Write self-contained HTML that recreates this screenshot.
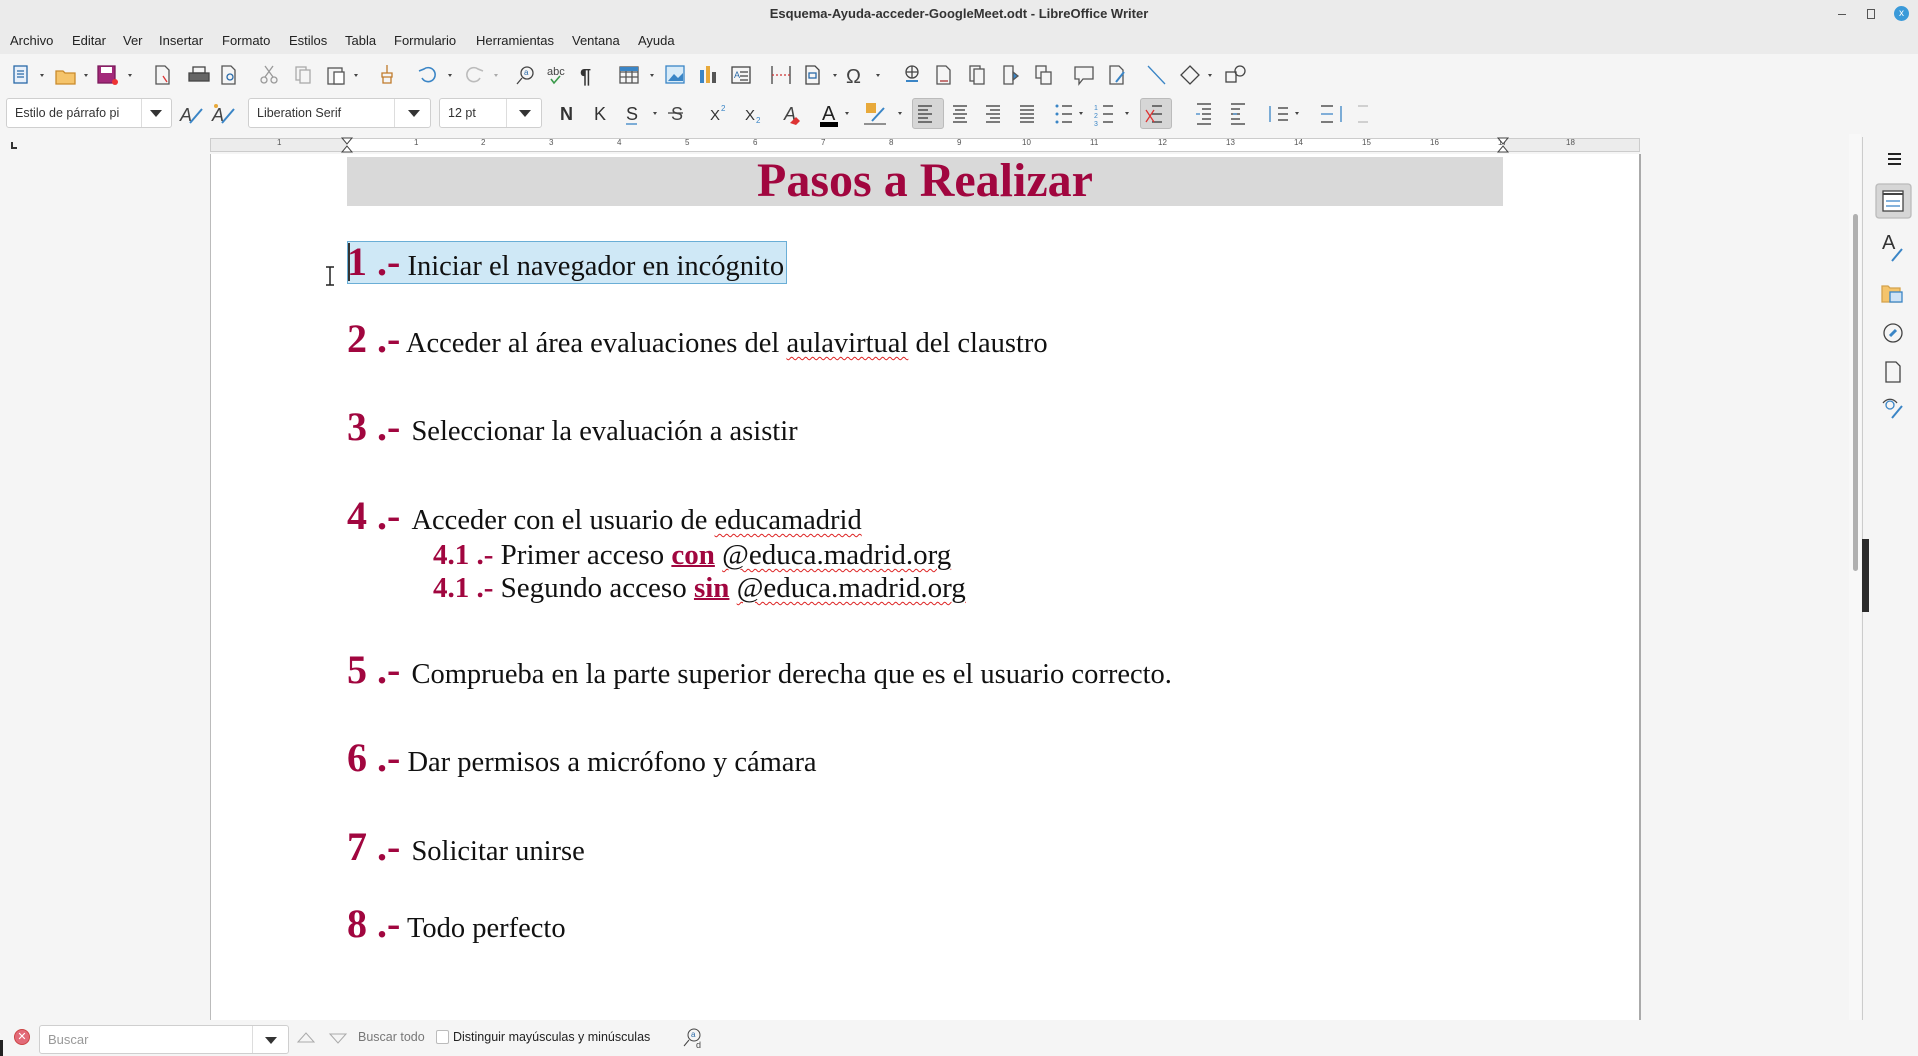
<!DOCTYPE html>
<html><head><meta charset="utf-8">
<style>
*{margin:0;padding:0;box-sizing:border-box}
body{width:1918px;height:1056px;overflow:hidden;background:#f5f5f5;font-family:"Liberation Sans",sans-serif;position:relative;color:#222}
.a{position:absolute}
.title{top:0;left:0;width:1918px;height:29px;background:#ebebeb;text-align:center;font-size:13px;font-weight:bold;line-height:28px;color:#333}
.menu{top:29px;left:0;width:1918px;height:25px;background:#ebebeb;font-size:13px;line-height:24px}
.menu span{position:absolute;top:0}
.tb{left:0;width:1918px;background:#f5f5f5}
.ic{position:absolute}
.box{position:absolute;background:#fff;border:1px solid #cfcfcf;border-radius:3px;font-size:12.5px;line-height:28px;padding-left:8px;color:#333}
.dd{position:absolute;width:0;height:0;border-left:6px solid transparent;border-right:6px solid transparent;border-top:7px solid #333}
.doc{font-family:"Liberation Serif",serif;color:#111;white-space:nowrap}
.it{position:absolute;font-size:40px;line-height:40px}
.it b{color:#a1063f;font-size:40px}
.it span{font-size:28.5px}
.it span span{font-size:inherit}
.it .p{padding-left:4px}
.sub{position:absolute;font-size:29px;line-height:29px}
.sub b{color:#a1063f}
.w{text-decoration:underline wavy #d22;text-decoration-thickness:1px;text-underline-offset:4px}
.u{color:#a1063f;font-weight:bold;text-decoration:underline;text-decoration-thickness:2px}
</style></head><body>
<div class="a title">Esquema-Ayuda-acceder-GoogleMeet.odt - LibreOffice Writer</div>
<div class="a" style="left:1838px;width:8px;height:1px;background:#555;top:14px"></div>
<div class="a" style="top:9px;left:1867px;width:8px;height:10px;border:1px solid #555"></div>
<div class="a" style="top:6px;left:1894px;width:15px;height:15px;border-radius:50%;background:#3b9ad9;color:#fff;font-size:10px;line-height:15px;text-align:center">x</div>
<div class="a menu">
<span style="left:10px">Archivo</span><span style="left:72px">Editar</span><span style="left:123px">Ver</span><span style="left:159px">Insertar</span><span style="left:222px">Formato</span><span style="left:289px">Estilos</span><span style="left:345px">Tabla</span><span style="left:394px">Formulario</span><span style="left:476px">Herramientas</span><span style="left:572px">Ventana</span><span style="left:638px">Ayuda</span>
</div>
<div class="a tb" style="top:54px;height:83px"></div>

<svg class="ic" style="left:0;top:62px" width="1300" height="28" viewBox="0 0 1300 28" fill="none" stroke-width="1.3">
<g stroke="#2a6aa8"><rect x="14" y="4" width="13" height="17" fill="#e8f0fa"/><path d="M17 9h7M17 12h7M17 15h7"/></g>
<path d="M40 12l2 3 2-3z" fill="#444"/>
<path d="M56 9h7l2 2h10v11H56z" fill="#f5c46b" stroke="#c98a2b"/>
<path d="M84 12l2 3 2-3z" fill="#444"/>
<rect x="98" y="4" width="17" height="17" fill="#a3297a" stroke="#7a1a5a"/><rect x="101" y="5" width="11" height="6" fill="#fff"/><circle cx="115" cy="20" r="3" fill="#e33"/>
<path d="M128 12l2 3 2-3z" fill="#444"/>
<g stroke="#555"><path d="M156 4h9l4 4v14h-13z"/></g><path d="M163 14l4 6" stroke="#d33"/>
<g stroke="#444"><rect x="189" y="11" width="20" height="8" fill="#666"/><rect x="193" y="5" width="12" height="6"/></g>
<g stroke="#555"><path d="M222 4h9l4 4v14h-13z"/><circle cx="230" cy="15" r="3" stroke="#2a6aa8"/></g>
<g stroke="#999"><circle cx="264" cy="18" r="3"/><circle cx="274" cy="18" r="3"/><path d="M265 15l8-11M273 15l-8-11"/></g>
<g stroke="#aaa"><rect x="296" y="5" width="10" height="13"/><rect x="300" y="8" width="10" height="13" fill="#f5f5f5"/></g>
<g stroke="#555"><rect x="328" y="6" width="14" height="16"/><rect x="334" y="10" width="10" height="12" fill="#fff"/></g>
<path d="M354 12l2 3 2-3z" fill="#444"/>
<g stroke="#c07a2a"><path d="M387 3v8M382 11h10v4h-10zM383 15v6h8v-6"/></g>
<path d="M422 16a7 7 0 1 0 2-9l-5 2" stroke="#3a85c6" stroke-width="1.6"/><path d="M448 12l2 3 2-3z" fill="#444"/>
<path d="M480 16a7 7 0 1 1-2-9l5 2" stroke="#bbb" stroke-width="1.6"/><path d="M494 12l2 3 2-3z" fill="#aaa"/>
<g stroke="#444"><circle cx="527" cy="11" r="6"/><path d="M522 16l-5 6"/></g><text x="524" y="13" font-size="8" fill="#2a6aa8" stroke="none">a</text>
<text x="547" y="13" font-size="11" fill="#444" stroke="none">abc</text><path d="M551 17l3 4 6-7" stroke="#3a9a4a" stroke-width="1.6"/>
<text x="580" y="21" font-size="20" font-weight="bold" fill="#333" stroke="none">¶</text>
<g stroke="#555"><rect x="620" y="5" width="18" height="16"/><path d="M620 10h18M620 15h18M626 5v16M632 5v16"/></g><rect x="620" y="5" width="18" height="4" fill="#3a85c6"/>
<path d="M650 12l2 3 2-3z" fill="#444"/>
<rect x="666" y="4" width="18" height="17" stroke="#3a85c6" fill="#d8ebf8"/><path d="M668 19l6-7 4 4 5-5v8z" fill="#3a85c6"/>
<rect x="700" y="8" width="4" height="13" fill="#3a85c6"/><rect x="706" y="4" width="4" height="17" fill="#e8a93a"/><rect x="712" y="10" width="4" height="11" fill="#555"/>
<g stroke="#444"><rect x="732" y="5" width="18" height="16"/><path d="M740 10h8M740 14h8M740 18h8"/></g><text x="734" y="16" font-size="9" fill="#2a6aa8" stroke="none">A</text>
<g stroke="#444"><path d="M772 4v18M790 4v18"/><path d="M772 13h18" stroke="#c33" stroke-dasharray="2 2"/></g>
<g stroke="#444"><path d="M806 4h9l4 4v14h-13z"/><rect x="809" y="11" width="7" height="5" stroke="#2a6aa8"/></g><path d="M833 12l2 3 2-3z" fill="#444"/>
<text x="846" y="21" font-size="20" fill="#444" stroke="none">Ω</text><path d="M876 12l2 3 2-3z" fill="#444"/>
<g stroke="#444"><circle cx="912" cy="10" r="6"/><path d="M906 10h12M912 4v12"/></g><path d="M906 19h12" stroke="#3a85c6" stroke-width="2"/>
<g stroke="#555"><path d="M937 4h9l4 4v14h-13z"/><path d="M940 19h8" stroke="#a33"/></g>
<g stroke="#555"><rect x="970" y="4" width="10" height="15"/><rect x="974" y="7" width="10" height="15" fill="#f5f5f5"/></g>
<g stroke="#555"><path d="M1004 4h9v18h-9z"/><path d="M1013 10l5 4-5 4z" fill="#3a85c6"/></g>
<g stroke="#555"><rect x="1036" y="4" width="10" height="12"/><rect x="1041" y="10" width="10" height="12" fill="#f5f5f5"/></g>
<path d="M1075 5h18v12h-10l-4 5v-5h-4z" stroke="#555"/>
<g stroke="#555"><path d="M1110 4h9l4 4v14h-13z"/><path d="M1116 20l8-10" stroke="#3a85c6" stroke-width="2"/></g>
<path d="M1148 4l17 18" stroke="#3a85c6"/>
<path d="M1190 4l9 9-9 9-9-9z" stroke="#444"/><path d="M1208 12l2 3 2-3z" fill="#444"/>
<g stroke="#444"><rect x="1226" y="10" width="10" height="10"/><circle cx="1240" cy="9" r="5"/></g>
</svg>

<div class="box" style="left:6px;top:98px;width:166px;height:30px">Estilo de párrafo pi</div>
<div class="a" style="left:141px;top:99px;width:1px;height:28px;background:#ddd"></div>
<div class="dd" style="left:150px;top:110px"></div>
<svg class="ic" style="left:178px;top:101px" width="60" height="26" fill="none" stroke-width="1.3"><text x="2" y="20" font-size="18" font-style="italic" fill="#444">A</text><path d="M12 22l12-14" stroke="#3a85c6" stroke-width="2"/><text x="34" y="20" font-size="18" font-style="italic" fill="#444">A</text><path d="M44 22l12-14" stroke="#3a85c6" stroke-width="2"/><circle cx="38" cy="5" r="2" fill="#e8a93a"/></svg>
<div class="box" style="left:248px;top:98px;width:183px;height:30px">Liberation Serif</div>
<div class="a" style="left:394px;top:99px;width:1px;height:28px;background:#ddd"></div>
<div class="dd" style="left:408px;top:110px"></div>
<div class="box" style="left:439px;top:98px;width:103px;height:30px">12 pt</div>
<div class="a" style="left:506px;top:99px;width:1px;height:28px;background:#ddd"></div>
<div class="dd" style="left:519px;top:110px"></div>
<div class="a" style="left:912px;top:98px;width:32px;height:31px;background:#d6d6d6;border:1px solid #bbb;border-radius:3px"></div>
<div class="a" style="left:1140px;top:98px;width:32px;height:31px;background:#d6d6d6;border:1px solid #bbb;border-radius:3px"></div>
<svg class="ic" style="left:550px;top:98px" width="820" height="32" fill="none" stroke-width="1.3">
<text x="10" y="22" font-size="18" font-weight="bold" fill="#333" stroke="none">N</text>
<text x="44" y="22" font-size="18" fill="#333" stroke="none">K</text>
<text x="76" y="22" font-size="18" fill="#333" stroke="none">S</text><path d="M76 26h11" stroke="#3a85c6"/><path d="M103 14l2 3 2-3z" fill="#444"/>
<text x="121" y="22" font-size="18" fill="#444" stroke="none">S</text><path d="M118 15h15" stroke="#444"/>
<text x="160" y="22" font-size="15" fill="#333" stroke="none">X</text><text x="171" y="13" font-size="8" fill="#3a85c6" stroke="none">2</text>
<text x="195" y="22" font-size="15" fill="#333" stroke="none">X</text><text x="206" y="25" font-size="8" fill="#3a85c6" stroke="none">2</text>
<text x="234" y="22" font-size="18" font-style="italic" fill="#444" stroke="none">A</text><path d="M240 25l6-6 4 4-4 4z" fill="#d33"/>
<text x="272" y="22" font-size="20" fill="#222" stroke="none">A</text><rect x="270" y="24" width="18" height="5" fill="#000"/><path d="M295 14l2 3 2-3z" fill="#444"/>
<rect x="316" y="5" width="10" height="10" fill="#e8a93a"/><path d="M314 26h22" stroke="#555"/><path d="M322 23l12-13" stroke="#3a85c6" stroke-width="2"/><path d="M348 14l2 3 2-3z" fill="#444"/>
<g stroke="#333"><path d="M368 8h14M368 12h10M368 16h14M368 20h10M368 24h14"/>
<path d="M403 8h14M405 12h10M403 16h14M405 20h10M403 24h14"/>
<path d="M436 8h14M440 12h10M436 16h14M440 20h10M436 24h14"/>
<path d="M470 8h14M470 12h14M470 16h14M470 20h14M470 24h14"/>
<path d="M512 8h10M512 16h10M512 24h10"/><path d="M553 8h10M553 16h10M553 24h10"/>
<path d="M602 8h10M602 16h10M602 24h10"/>
<path d="M647 6h14M652 11h9M652 16h9M652 21h9M647 26h14"/><path d="M681 6h14M681 11h9M681 16h9M681 21h9M681 26h14"/>
<path d="M728 10h10M728 16h10M728 22h10"/><path d="M771 8h12M771 24h12"/>
</g>
<g fill="#3a85c6" stroke="none"><circle cx="507" cy="8" r="1.5"/><circle cx="507" cy="16" r="1.5"/><circle cx="507" cy="24" r="1.5"/></g>
<path d="M529 14l2 3 2-3zM575 14l2 3 2-3zM745 14l2 3 2-3z" fill="#444"/>
<text x="544" y="12" font-size="7" fill="#3a85c6">1</text><text x="544" y="20" font-size="7" fill="#3a85c6">2</text><text x="544" y="28" font-size="7" fill="#3a85c6">3</text>
<path d="M596 12l8 12M604 12l-8 12" stroke="#d33"/>
<path d="M646 16h4M687 16h-4M720 8v16M771 16h12M791 8v16" stroke="#3a85c6"/>
<path d="M808 8h10M808 24h10" stroke="#bbb"/>
</svg>

<div class="a" style="left:0;top:137px;width:1918px;height:17px;background:#f5f5f5"></div>
<div class="a" style="left:11px;top:142px;width:2px;height:6px;background:#333"></div><div class="a" style="left:11px;top:147px;width:6px;height:2px;background:#333"></div>
<div class="a" style="left:210px;top:138px;width:1430px;height:14px;background:#ececec;border:1px solid #ccc"></div>
<div class="a" style="left:347px;top:139px;width:1156px;height:12px;background:#fff"></div>
<div class="a" style="left:210px;top:137px;width:1430px;height:16px;font-size:8px;color:#555">
<span class="a" style="left:67px;top:1px">1</span><span class="a" style="left:204px;top:1px">1</span><span class="a" style="left:271px;top:1px">2</span><span class="a" style="left:339px;top:1px">3</span><span class="a" style="left:407px;top:1px">4</span><span class="a" style="left:475px;top:1px">5</span><span class="a" style="left:543px;top:1px">6</span><span class="a" style="left:611px;top:1px">7</span><span class="a" style="left:679px;top:1px">8</span><span class="a" style="left:747px;top:1px">9</span><span class="a" style="left:812px;top:1px">10</span><span class="a" style="left:880px;top:1px">11</span><span class="a" style="left:948px;top:1px">12</span><span class="a" style="left:1016px;top:1px">13</span><span class="a" style="left:1084px;top:1px">14</span><span class="a" style="left:1152px;top:1px">15</span><span class="a" style="left:1220px;top:1px">16</span><span class="a" style="left:1288px;top:1px">17</span><span class="a" style="left:1356px;top:1px">18</span>
</div>
<svg class="a" style="left:340px;top:137px" width="14" height="16"><path d="M2 1h10L7 7zM2 15h10L7 9z" fill="#fff" stroke="#444"/></svg>
<svg class="a" style="left:1496px;top:137px" width="14" height="16"><path d="M2 1h10L7 7zM2 15h10L7 9z" fill="#fff" stroke="#444"/></svg>

<div class="a" style="left:210px;top:154px;width:1431px;height:866px;background:#fff;border-left:1px solid #bbb;border-right:2px solid #aaa"></div>
<div class="a" style="left:347px;top:157px;width:1156px;height:49px;background:#d9d9d9"></div>
<div class="a doc" style="left:347px;top:154px;width:1156px;text-align:center;font-size:48px;line-height:54px;font-weight:bold;color:#a1063f">Pasos a Realizar</div>
<div class="a" style="left:347px;top:241px;width:440px;height:43px;background:#cfe8f6;border:1px solid #6aaed6"></div>
<div class="a" style="left:348px;top:243px;width:2px;height:38px;background:#333"></div>
<svg class="a" style="left:324px;top:266px" width="12" height="20"><path d="M2 1h8M6 1v18M2 19h8" stroke="#222" stroke-width="1.5"/></svg>

<div class="doc">
<div class="it" style="left:347px;top:242px"><b>1 .-</b><span> Iniciar el navegador en incógnito</span></div>
<div class="it" style="left:347px;top:319px"><b>2 .-</b><span> Acceder al área evaluaciones del <span class="w">aulavirtual</span> del claustro</span></div>
<div class="it" style="left:347px;top:407px"><b>3 .-</b><span> <span class="p">Seleccionar la evaluación a asistir</span></span></div>
<div class="it" style="left:347px;top:496px"><b>4 .-</b><span> <span class="p">Acceder con el usuario de <span class="w">educamadrid</span></span></span></div>
<div class="sub" style="left:433px;top:541px"><b>4.1 .-</b> Primer acceso <span class="u">con</span> <span class="w">@educa.madrid.org</span></div>
<div class="sub" style="left:433px;top:574px"><b>4.1 .-</b> Segundo acceso <span class="u">sin</span> <span class="w">@educa.madrid.org</span></div>
<div class="it" style="left:347px;top:650px"><b>5 .-</b><span> <span class="p">Comprueba en la parte superior derecha que es el usuario correcto.</span></span></div>
<div class="it" style="left:347px;top:738px"><b>6 .-</b><span> Dar permisos a micrófono y cámara</span></div>
<div class="it" style="left:347px;top:827px"><b>7 .-</b><span> <span class="p">Solicitar unirse</span></span></div>
<div class="it" style="left:347px;top:904px"><b>8 .-</b><span> Todo perfecto</span></div>
</div>

<div class="a" style="left:1849px;top:134px;width:12px;height:886px;background:#f8f8f8"></div>
<div class="a" style="left:1853px;top:214px;width:5px;height:357px;background:#b0b0b0;border-radius:3px"></div>
<div class="a" style="left:1863px;top:137px;width:55px;height:884px;background:#f5f5f5"></div>
<div class="a" style="left:1862px;top:137px;width:1px;height:884px;background:#ccc"></div>
<div class="a" style="left:1862px;top:539px;width:7px;height:73px;background:#2b2b2b"></div>
<svg class="a" style="left:1870px;top:137px" width="48" height="320" fill="none" stroke-width="1.3">
<path d="M18 17h13M18 22h13M18 27h13" stroke="#222" stroke-width="2"/>
<rect x="6" y="47" width="35" height="34" rx="3" fill="#d6d6d6" stroke="#bbb"/>
<rect x="13" y="54" width="20" height="20" fill="#fff" stroke="#444"/><path d="M13 57h20" stroke="#444" stroke-width="2"/><path d="M16 64h14M16 69h14" stroke="#3a85c6"/>
<text x="12" y="112" font-size="20" fill="#333" stroke="none">A</text><path d="M22 124l10-12" stroke="#3a85c6" stroke-width="2"/>
<path d="M12 149h6l2 2h10v14H12z" fill="#f5c46b" stroke="#d4a24c"/><rect x="20" y="155" width="12" height="10" fill="#cfe3f5" stroke="#3a85c6"/>
<circle cx="23" cy="196" r="9" stroke="#444"/><path d="M20 199l6-6" stroke="#3a85c6" stroke-width="3"/>
<path d="M16 225h10l4 4v16H16z" stroke="#444"/>
<circle cx="20" cy="268" r="4" stroke="#3a85c6"/><path d="M13 266c4-5 10-5 14 0" stroke="#444"/><path d="M22 281l10-12" stroke="#3a85c6" stroke-width="2"/>
</svg>

<div class="a" style="left:0;top:1020px;width:1918px;height:36px;background:#f5f5f5"></div>
<div class="a" style="left:14px;top:1029px;width:16px;height:16px;border-radius:50%;background:#e26a78;border:1px solid #c44;color:#fff;font-size:11px;line-height:14px;text-align:center">✕</div>
<div class="box" style="left:39px;top:1025px;width:250px;height:29px;color:#999;font-size:13px;line-height:27px">Buscar</div>
<div class="a" style="left:252px;top:1026px;width:1px;height:27px;background:#ddd"></div>
<div class="dd" style="left:265px;top:1037px"></div>
<svg class="a" style="left:296px;top:1030px" width="60" height="16" fill="none" stroke="#aaa"><path d="M2 12l8-9 8 9z"/><path d="M34 4l8 9 8-9z"/></svg>
<div class="a" style="left:358px;top:1030px;font-size:12.5px;color:#777">Buscar todo</div>
<div class="a" style="left:436px;top:1030px;width:13px;height:14px;border:1px solid #bbb;background:#fff;border-radius:2px"></div>
<div class="a" style="left:453px;top:1030px;font-size:12.5px;color:#222">Distinguir mayúsculas y minúsculas</div>
<svg class="a" style="left:682px;top:1026px" width="24" height="24" fill="none" stroke="#444"><circle cx="12" cy="9" r="6"/><path d="M7 14l-5 6"/><text x="9" y="11" font-size="8" fill="#2a6aa8" stroke="none">a</text><text x="14" y="22" font-size="9" fill="#444" stroke="none">d</text></svg>
<div class="a" style="left:0;top:1040px;width:3px;height:16px;background:#222"></div>
</body></html>
